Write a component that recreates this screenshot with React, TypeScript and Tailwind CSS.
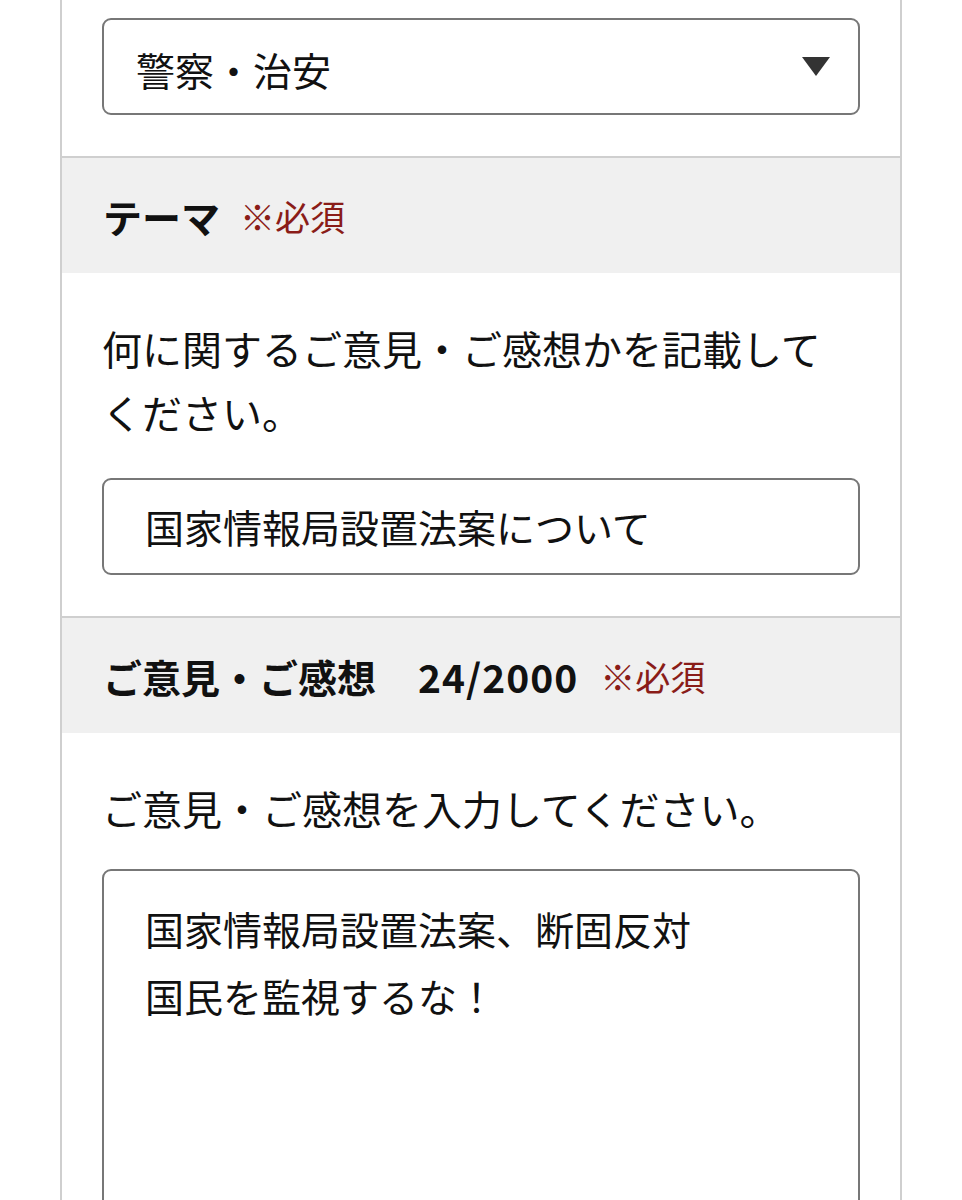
const Required = ({ className = "ml-5" }: { className?: string }) => (
  <span className={`${className} text-[35px] font-normal text-[#8a1c18]`}>※必須</span>
);

const SectionHeader = ({ children }: { children: React.ReactNode }) => (
  <div className="flex h-[117px] items-center border-t-2 border-[#cfcfcf] bg-[#f0f0f0] px-[41px] pt-[2px]">
    {children}
  </div>
);

const App = () => {
  const theme = "国家情報局設置法案について";
  const opinion = ["国家情報局設置法案、断固反対", "国民を監視するな！"];

  return (
    <div className="min-h-[1200px] bg-white font-['Noto_Sans_CJK_JP',sans-serif] text-[#111]">
      <div className="mx-[60px] border-x-2 border-[#cfcfcf] bg-white">
        {/* category */}
        <div className="px-10 pt-[18px] pb-[41px]">
          <div className="flex h-[97px] items-center justify-between rounded-[9px] border-2 border-[#777] pl-[32px] pr-[28px]">
            <span className="pt-[6px] text-[39px] leading-none">警察・治安</span>
            <svg width="28" height="19" viewBox="0 0 28 19">
              <polygon points="0,0 28,0 14,19" fill="#333" />
            </svg>
          </div>
        </div>

        {/* theme */}
        <SectionHeader>
          <span className="text-[39px] font-bold leading-none">テーマ</span>
          <Required />
        </SectionHeader>
        <div className="px-10 pt-[43px] pb-[41px]">
          <p className="w-[740px] text-[40px] leading-[64px]">
            何に関するご意見・ご感想かを記載してください。
          </p>
          <div className="mt-[34px] flex h-[97px] items-center rounded-[9px] border-2 border-[#777] pl-[41px]">
            <span className="text-[39px] leading-none">{theme}</span>
          </div>
        </div>

        {/* opinion */}
        <SectionHeader>
          <span className="text-[39px] font-bold leading-none">ご意見・ご感想</span>
          <span className="ml-[42px] text-[39px] font-bold leading-none tracking-[1px]">
            24/2000
          </span>
          <Required className="ml-[22px]" />
        </SectionHeader>
        <div className="px-10 pt-[43px] pb-10">
          <p className="text-[40px] leading-[64px]">ご意見・ご感想を入力してください。</p>
          <div className="mt-[29px] h-[420px] rounded-[9px] border-2 border-[#777] pl-[41px] pt-[24px]">
            {opinion.map((line) => (
              <p key={line} className="text-[39px] leading-[67px]">
                {line}
              </p>
            ))}
          </div>
        </div>
      </div>
    </div>
  );
};

export default App;
